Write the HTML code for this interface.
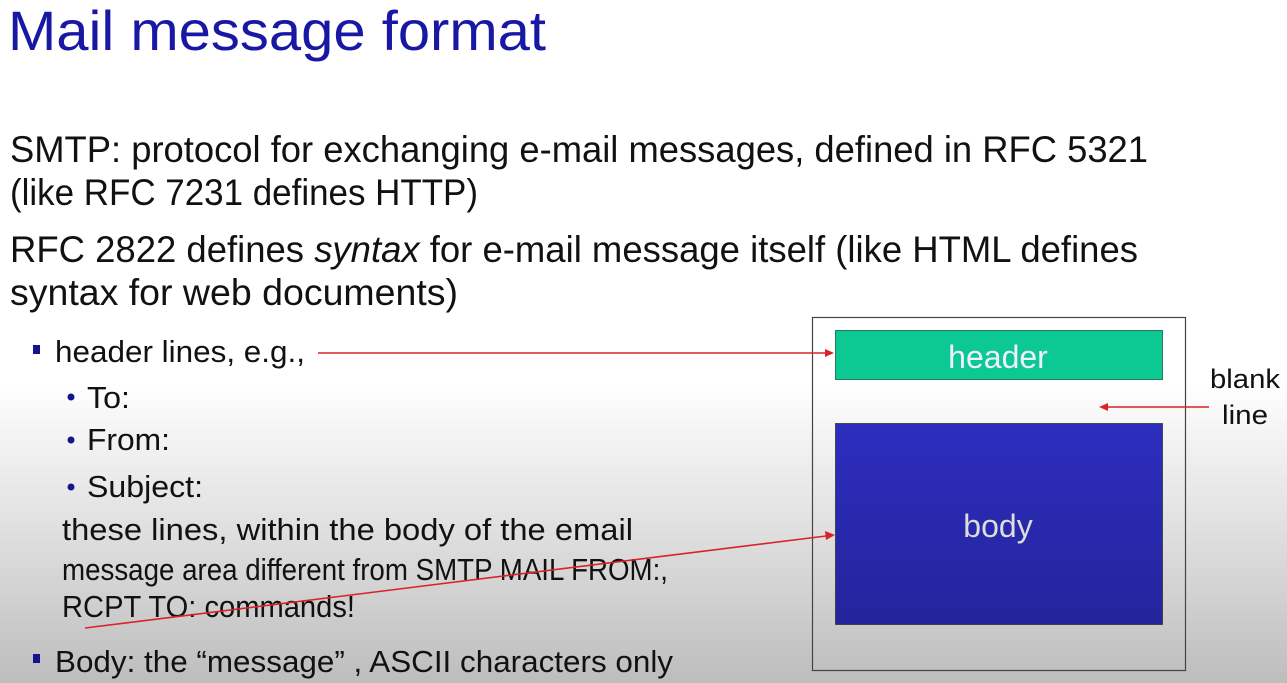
<!DOCTYPE html>
<html><head><meta charset="utf-8"><style>
html,body{margin:0;padding:0;width:1287px;height:683px;overflow:hidden;background:#fff}
svg{display:block}
</style></head><body>
<svg width="1287" height="683" viewBox="0 0 1287 683" xmlns="http://www.w3.org/2000/svg">
<defs>
<linearGradient id="bg" x1="0" y1="0" x2="0" y2="1">
<stop offset="0" stop-color="#fff"/>
<stop offset="0.56" stop-color="#fff"/>
<stop offset="0.8" stop-color="#dcdcdc"/>
<stop offset="1" stop-color="#bdbdbd"/>
</linearGradient>
<linearGradient id="bd" x1="0" y1="0" x2="0" y2="1">
<stop offset="0" stop-color="#2d2dbf"/>
<stop offset="1" stop-color="#24249c"/>
</linearGradient>
</defs>
<rect width="1287" height="683" fill="url(#bg)"/>
<g font-family="Liberation Sans, sans-serif">
<text x="8" y="50" font-size="56" fill="#1818a4" textLength="538" lengthAdjust="spacingAndGlyphs">Mail message format</text>
<g fill="#111" font-size="37">
<text x="10" y="162" textLength="1138" lengthAdjust="spacingAndGlyphs">SMTP: protocol for exchanging e-mail messages, defined in RFC 5321</text>
<text x="10" y="205" textLength="468" lengthAdjust="spacingAndGlyphs">(like RFC 7231 defines HTTP)</text>
<text x="10" y="262" textLength="1128" lengthAdjust="spacingAndGlyphs">RFC 2822 defines <tspan font-style="italic">syntax</tspan> for e-mail message itself (like HTML defines</text>
<text x="10" y="305" textLength="448" lengthAdjust="spacingAndGlyphs">syntax for web documents)</text>
</g>
<g fill="#111" font-size="31">
<text x="55" y="362" textLength="250" lengthAdjust="spacingAndGlyphs">header lines, e.g.,</text>
<text x="87" y="408" textLength="43" lengthAdjust="spacingAndGlyphs">To:</text>
<text x="87" y="450" textLength="83" lengthAdjust="spacingAndGlyphs">From:</text>
<text x="87" y="497" textLength="116" lengthAdjust="spacingAndGlyphs">Subject:</text>
<text x="62" y="540" textLength="571" lengthAdjust="spacingAndGlyphs">these lines, within the body of the email</text>
<text x="62" y="580" textLength="606" lengthAdjust="spacingAndGlyphs">message area different from SMTP MAIL FROM:,</text>
<text x="62" y="617" textLength="293" lengthAdjust="spacingAndGlyphs">RCPT TO: commands!</text>
<text x="55" y="672" textLength="618" lengthAdjust="spacingAndGlyphs">Body: the “message” , ASCII characters only</text>
</g>
<rect x="33" y="345" width="7" height="9" fill="#14148c"/>
<rect x="33" y="654" width="7" height="9" fill="#14148c"/>
<circle cx="71" cy="397" r="3.5" fill="#14148c"/>
<circle cx="71" cy="440" r="3.5" fill="#14148c"/>
<circle cx="71" cy="487" r="3.5" fill="#14148c"/>
<rect x="812.5" y="317.5" width="373" height="353" fill="none" stroke="#444" stroke-width="1.2"/>
<rect x="835.5" y="330.5" width="327" height="49" fill="#0cc994" stroke="#2a7a5a" stroke-width="1"/>
<rect x="835.5" y="423.5" width="327" height="201" fill="url(#bd)" stroke="#333" stroke-width="0.8"/>
<text x="998" y="368" font-size="32" fill="#eef" text-anchor="middle">header</text>
<text x="998" y="537" font-size="32" fill="#ddd" text-anchor="middle">body</text>
<text x="1210" y="388" font-size="27" fill="#111" textLength="70" lengthAdjust="spacingAndGlyphs">blank</text>
<text x="1222" y="424" font-size="27" fill="#111" textLength="46" lengthAdjust="spacingAndGlyphs">line</text>
</g>
<g stroke="#d8232a" stroke-width="1.6" fill="#d8232a">
<line x1="318" y1="353" x2="826" y2="353"/>
<polygon points="834,353 825,349 825,357" stroke="none"/>
<line x1="85" y1="628" x2="826" y2="536"/>
<polygon points="835,535 825,531 826,540" stroke="none"/>
<line x1="1209" y1="407" x2="1107" y2="407"/>
<polygon points="1099,407 1108,403 1108,411" stroke="none"/>
</g>
</svg>
</body></html>
